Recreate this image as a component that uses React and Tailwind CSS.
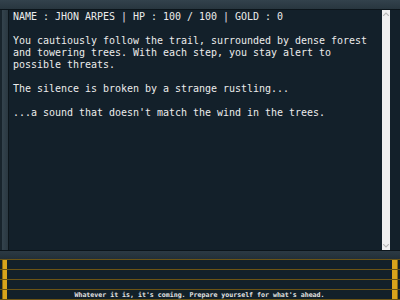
export default function App() {
    const rows = [0, 1, 2, 3];

    return (
        <div className="w-[400px] h-[300px] bg-[#101c24] flex flex-col overflow-hidden" style={{ fontFamily: '"DejaVu Sans Mono", "Liberation Mono", monospace' }}>
            {/* Top frame */}
            <div className="h-[10px] bg-gradient-to-b from-[#33424c] to-[#28363f] border-b border-[#0c151b]" />

            {/* Main story area */}
            <div className="flex flex-1 min-h-0">
                <div className="w-[9px] flex">
                    <div className="w-[2px] bg-[#18242c]" />
                    <div className="w-[6px] bg-gradient-to-r from-[#34434d] to-[#2a3841]" />
                    <div className="w-[1px] bg-[#0c151b]" />
                </div>
                <div className="flex-1 bg-[#13202a] pl-[4px] pt-[1px] text-[9.97px] leading-[12px] text-[#ececec] whitespace-pre">
                    <p>NAME : JHON ARPES | HP : 100 / 100 | GOLD : 0</p>
                    <p>&nbsp;</p>
                    <p>You cautiously follow the trail, surrounded by dense forest</p>
                    <p>and towering trees. With each step, you stay alert to</p>
                    <p>possible threats.</p>
                    <p>&nbsp;</p>
                    <p>The silence is broken by a strange rustling...</p>
                    <p>&nbsp;</p>
                    <p>...a sound that doesn't match the wind in the trees.</p>
                </div>
                {/* Scrollbar */}
                <div className="w-[8px] bg-[#f0f0f0] flex flex-col justify-between items-center py-[2px]">
                    <svg width="6" height="4" viewBox="0 0 6 4"><path d="M0 4 L3 1 L6 4" fill="none" stroke="#b8b8b8" strokeWidth="1.2" /></svg>
                    <svg width="6" height="4" viewBox="0 0 6 4"><path d="M0 0 L3 3 L6 0" fill="none" stroke="#b8b8b8" strokeWidth="1.2" /></svg>
                </div>
                <div className="w-[10px] bg-[#13202a]" />
            </div>

            {/* Gray separator band */}
            <div className="h-[9px] bg-gradient-to-b from-[#2c3a44] to-[#222f38] border-t border-[#0c151b]" />

            {/* Choice rows */}
            <div className="border-t border-[#6a5416]">
                {rows.map((i) => (
                    <div key={i} className="h-[10px] border-b border-[#6a5416] bg-[#122029] flex items-center">
                        <div className="w-[2px]" />
                        <div className="w-[5px] h-[9px] bg-[#d8a41c] border-l border-[#8a6a10]" />
                        <div className="flex-1 text-center text-[6.6px] leading-[10px] font-bold text-[#e4e4e4] whitespace-pre">
                            {i === 3 ? "Whatever it is, it's coming. Prepare yourself for what's ahead." : ""}
                        </div>
                        <div className="w-[6px] h-[9px] bg-[#d8a41c] border-r border-[#8a6a10]" />
                        <div className="w-[2px]" />
                    </div>
                ))}
            </div>
        </div>
    );
}
